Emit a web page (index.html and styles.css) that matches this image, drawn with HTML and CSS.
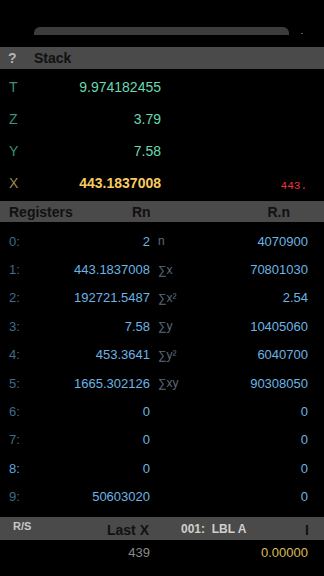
FILE: index.html
```html
<!DOCTYPE html>
<html lang="en">
<head>
    <meta charset="UTF-8">
    <meta name="viewport" content="width=device-width, initial-scale=1.0">
    <title>RPN Stack</title>
    <link rel="stylesheet" href="styles.css">
</head>
<body>

    <!-- Grabber -->
    <div class="topo">
        <div class="alca"></div>
        <div class="ponto"></div>
    </div>

    <!-- Stack -->
    <div class="cabecalho">
        <span class="ajuda">?</span>
        <span class="titulo">Stack</span>
    </div>
    <div class="pilha">
        <div class="linha"><span class="rotulo">T</span><span class="valor">9.974182455</span></div>
        <div class="linha"><span class="rotulo">Z</span><span class="valor">3.79</span></div>
        <div class="linha"><span class="rotulo">Y</span><span class="valor">7.58</span></div>
        <div class="linha x"><span class="rotulo">X</span><span class="valor">443.1837008</span><span class="lcd">443.</span></div>
    </div>

    <!-- Registros -->
    <div class="cabecalho reg">
        <span class="c1">Registers</span>
        <span class="c2">Rn</span>
        <span class="c3"></span>
        <span class="c4">R.n</span>
    </div>
    <div class="registros">
        <div class="reg-linha"><span class="idx">0:</span><span class="rn">2</span><span class="sig">n</span><span class="rdn">4070900</span></div>
        <div class="reg-linha"><span class="idx">1:</span><span class="rn">443.1837008</span><span class="sig">&sum;x</span><span class="rdn">70801030</span></div>
        <div class="reg-linha"><span class="idx">2:</span><span class="rn">192721.5487</span><span class="sig">&sum;x&sup2;</span><span class="rdn">2.54</span></div>
        <div class="reg-linha"><span class="idx">3:</span><span class="rn">7.58</span><span class="sig">&sum;y</span><span class="rdn">10405060</span></div>
        <div class="reg-linha"><span class="idx">4:</span><span class="rn">453.3641</span><span class="sig">&sum;y&sup2;</span><span class="rdn">6040700</span></div>
        <div class="reg-linha"><span class="idx">5:</span><span class="rn">1665.302126</span><span class="sig">&sum;xy</span><span class="rdn">90308050</span></div>
        <div class="reg-linha"><span class="idx">6:</span><span class="rn">0</span><span class="sig"></span><span class="rdn">0</span></div>
        <div class="reg-linha"><span class="idx">7:</span><span class="rn">0</span><span class="sig"></span><span class="rdn">0</span></div>
        <div class="reg-linha"><span class="idx ativo">8:</span><span class="rn">0</span><span class="sig"></span><span class="rdn">0</span></div>
        <div class="reg-linha"><span class="idx">9:</span><span class="rn">50603020</span><span class="sig"></span><span class="rdn">0</span></div>
    </div>

    <!-- Rodape -->
    <div class="rodape">
        <span class="rs">R/S</span>
        <span class="lastx">Last X</span>
        <span class="prog">001:  LBL A</span>
        <span class="cursor">I</span>
    </div>
    <div class="rodape-valores">
        <span class="v-lastx">439</span>
        <span class="v-prog">0.00000</span>
    </div>

</body>
</html>
```

FILE: styles.css
```css
body {
    margin: 0;
    background-color: #000;
    font-family: "Liberation Sans", Arial, sans-serif;
    color: #fff;
    width: 324px;
    height: 576px;
    overflow: hidden;
}
.topo {
    display: flex;
    align-items: flex-end;
    height: 35px;
}
.alca {
    margin-left: 34px;
    width: 255px;
    height: 8px;
    background-color: #3c3c3c;
    border-radius: 6px 6px 0 0;
}
.ponto {
    margin-left: 12px;
    margin-bottom: 1px;
    width: 2px;
    height: 1px;
    background-color: #555;
}
.cabecalho {
    margin-top: 12px;
    height: 22px;
    background-color: #4a4a4a;
    display: flex;
    align-items: center;
    font-size: 14px;
    font-weight: bold;
    color: #111;
}
.ajuda {
    color: #b4b4b4;
    width: 34px;
    padding-left: 8px;
    box-sizing: border-box;
}
.pilha {
    padding-top: 2px;
}
.pilha .linha {
    height: 32px;
    display: flex;
    align-items: center;
    font-size: 14px;
}
.rotulo {
    width: 60px;
    padding-left: 9px;
    box-sizing: border-box;
    color: #3c927a;
}
.valor {
    width: 101px;
    text-align: right;
    color: #6ad8b0;
}
.linha.x .rotulo {
    color: #9e8650;
}
.linha.x .valor {
    color: #f6cb60;
    font-weight: bold;
}
.lcd {
    margin-left: auto;
    margin-right: 17px;
    margin-top: 6px;
    font-family: "Liberation Mono", monospace;
    font-size: 11px;
    color: #ec3440;
}
.cabecalho.reg {
    margin-top: 2px;
    height: 21px;
}
.c1 {
    width: 132px;
    padding-left: 9px;
    box-sizing: border-box;
}
.c2 {
    width: 30px;
}
.c4 {
    margin-left: auto;
    margin-right: 34px;
}
.registros {
    padding-top: 5px;
}
.reg-linha {
    height: 28.4px;
    display: flex;
    align-items: center;
    font-size: 13px;
}
.idx {
    width: 40px;
    padding-left: 9px;
    box-sizing: border-box;
    color: #3d6c8c;
}
.idx.ativo {
    color: #5aa6de;
}
.rn {
    width: 110px;
    text-align: right;
    color: #6cb4e4;
}
.sig {
    width: 50px;
    padding-left: 8px;
    box-sizing: border-box;
    color: #5b6b7a;
    font-size: 12px;
}
.rdn {
    width: 108px;
    text-align: right;
    color: #6cb4e4;
}
.rodape {
    margin-top: 6px;
    height: 23px;
    background-color: #4a4a4a;
    display: flex;
    font-weight: bold;
}
.rs {
    width: 107px;
    padding: 3px 0 0 13px;
    box-sizing: border-box;
    font-size: 11px;
    color: #c8c8c8;
}
.lastx {
    width: 74px;
    padding-top: 5px;
    font-size: 14px;
    color: #111;
}
.prog {
    padding-top: 5px;
    font-size: 12px;
    color: #cfcfcf;
    white-space: pre;
}
.cursor {
    margin-left: auto;
    margin-right: 15px;
    padding-top: 5px;
    font-size: 14px;
    color: #111;
}
.rodape-valores {
    display: flex;
    height: 26px;
    align-items: center;
    font-size: 13px;
}
.v-lastx {
    width: 150px;
    text-align: right;
    color: #8a8a8a;
}
.v-prog {
    width: 158px;
    text-align: right;
    color: #dcbc55;
}
```
